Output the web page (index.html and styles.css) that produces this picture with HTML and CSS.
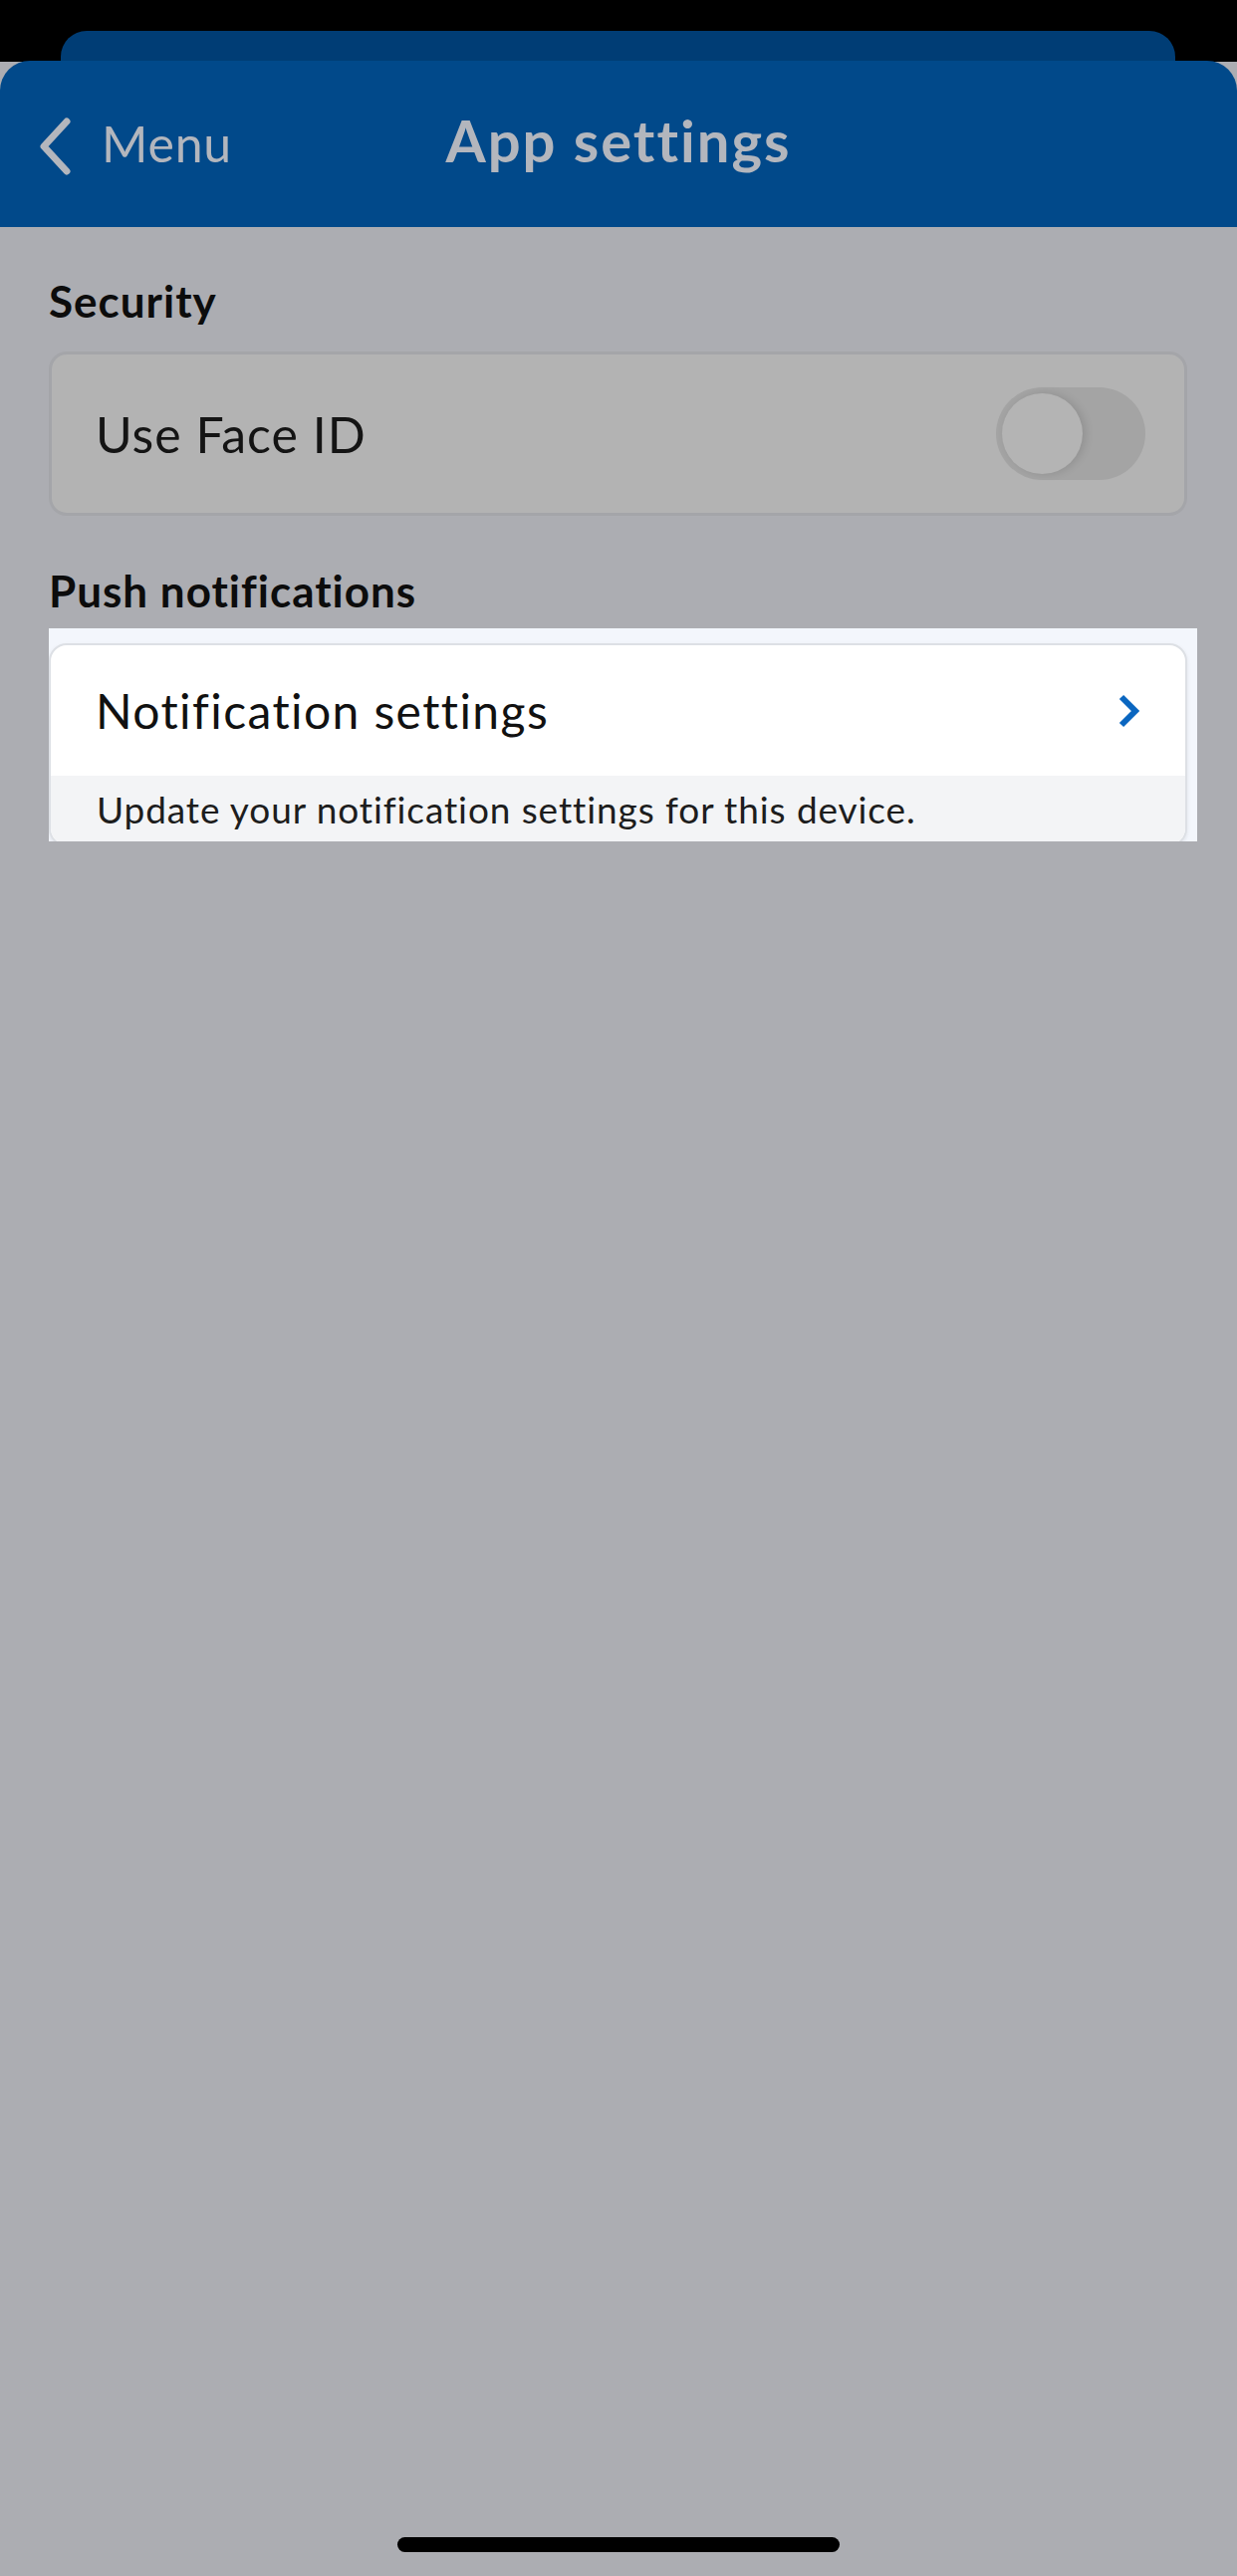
FILE: index.html
```html
<!DOCTYPE html>
<html lang="en">
<head>
    <meta charset="UTF-8">
    <meta name="viewport" content="width=device-width, initial-scale=1.0">
    <title>App settings</title>
    <link rel="stylesheet" href="styles.css">
</head>
<body>
    <div class="screen">
        <div class="sheet-top">
            <div class="sheet-back"></div>
        </div>

        <header class="nav">
            <a class="nav-back" href="#">
                <svg class="nav-chevron" viewBox="0 0 34 58" width="34" height="58">
                    <path d="M29 4 L6 29 L29 54" fill="none" stroke="currentColor" stroke-width="7" stroke-linecap="round" stroke-linejoin="round"/>
                </svg>
                <span>Menu</span>
            </a>
            <h1 class="nav-title">App settings</h1>
            <div></div>
        </header>

        <main class="content">
            <h2 class="section-title">Security</h2>
            <div class="card card-dim">
                <div class="row">
                    <span class="row-label">Use Face ID</span>
                    <div class="toggle"><div class="toggle-knob"></div></div>
                </div>
            </div>

            <h2 class="section-title section-push">Push notifications</h2>
            <div class="spotlight">
                <div class="card card-lit">
                    <div class="row row-link">
                        <span class="row-label row-label-lit">Notification settings</span>
                        <svg class="row-chevron" viewBox="0 0 24 36" width="24" height="36">
                            <path d="M5 4 L19 18 L5 32" fill="none" stroke="#0a66c0" stroke-width="6" stroke-linejoin="miter"/>
                        </svg>
                    </div>
                    <div class="row-hint">Update your notification settings for this device.</div>
                </div>
            </div>
        </main>

        <div class="home-bar"></div>
    </div>
</body>
</html>
```

FILE: styles.css
```css
body {
    margin: 0;
    background-color: #000;
    font-family: 'Lato', 'Open Sans', sans-serif;
    color: #111;
}

.screen {
    width: 1242px;
    min-height: 2587px;
    display: flex;
    flex-direction: column;
    background-color: #acadb2;
}

.sheet-top {
    background-color: #000;
    height: 62px;
    padding: 31px 62px 0 61px;
    box-sizing: border-box;
}

.sheet-back {
    height: 31px;
    background-color: #003d75;
    border-radius: 26px 26px 0 0;
}

.nav {
    background-color: #01498a;
    height: 167px;
    margin-top: -1px;
    border-radius: 30px 30px 0 0;
    display: grid;
    grid-template-columns: 1fr auto 1fr;
    align-items: start;
    padding-top: 51px;
    box-sizing: border-box;
    color: #b3b6bd;
}

.nav-back {
    display: flex;
    align-items: center;
    color: #b3b6bd;
    text-decoration: none;
    font-size: 50px;
    line-height: 1;
    padding-left: 38px;
    letter-spacing: 0.8px;
}

.nav-chevron {
    margin-right: 30px;
    margin-top: 6px;
}

.nav-title {
    margin: 0;
    font-size: 58px;
    font-weight: 700;
    line-height: 1;
    letter-spacing: 2px;
}

.content {
    padding: 0 50px 0 49px;
    display: flex;
    flex-direction: column;
}

.section-title {
    margin: 52px 0 29px;
    font-size: 44px;
    font-weight: 700;
    line-height: 1;
    letter-spacing: 1px;
    color: #0c0c0c;
}

.section-push {
    margin: 53px 0 16px;
}

.card {
    border-radius: 18px;
    overflow: hidden;
    box-sizing: border-box;
}

.card-dim {
    height: 165px;
    background-color: #b3b3b3;
    border: 3px solid #a4a5a9;
}

.row {
    height: 100%;
    display: flex;
    align-items: center;
    justify-content: space-between;
    padding: 0 39px 0 44px;
}

.row-label {
    font-size: 50px;
    line-height: 1;
    color: #141414;
    letter-spacing: 1px;
}

.toggle {
    width: 150px;
    height: 93px;
    border-radius: 47px;
    background-color: #a4a4a4;
    padding: 6px;
    box-sizing: border-box;
}

.toggle-knob {
    width: 81px;
    height: 81px;
    border-radius: 50%;
    background-color: #b4b4b4;
    box-shadow: 3px 0 8px rgba(0, 0, 0, 0.12);
}

.spotlight {
    margin-right: -10px;
    height: 214px;
    background-color: #f3f6fc;
    padding: 15px 10px 0 0;
    box-sizing: border-box;
    overflow: hidden;
}

.card-lit {
    height: 204px;
    background-color: #fff;
    border: 2px solid #dde0e5;
    box-shadow: 0 2px 4px rgba(0, 0, 0, 0.08);
}

.row-link {
    height: 131px;
    padding: 0 45px 0 45px;
}

.row-label-lit {
    font-size: 48px;
    color: #111;
    letter-spacing: 1.4px;
}

.row-hint {
    height: 71px;
    background-color: #f3f4f6;
    padding: 15px 0 0 46px;
    box-sizing: border-box;
    font-size: 37px;
    line-height: 1;
    color: #1d1d1d;
    letter-spacing: 0.9px;
}

.home-bar {
    margin: auto auto 24px;
    width: 444px;
    height: 15px;
    border-radius: 8px;
    background-color: #000;
}
```
